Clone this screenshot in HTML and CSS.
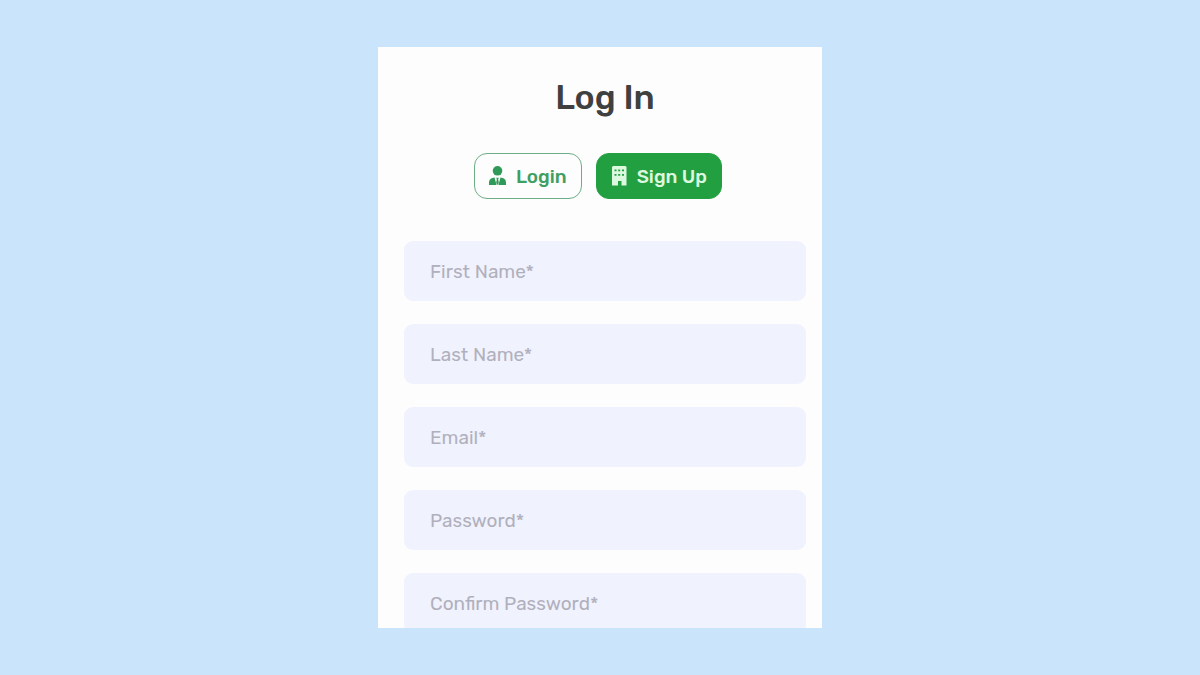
FILE: index.html
```html
<!DOCTYPE html>
<html lang="en">
<head>
<meta charset="utf-8">
<meta name="viewport" content="width=device-width, initial-scale=1">
<title>Log In</title>
<link rel="stylesheet" href="styles.css">
</head>
<body class="page">
<main class="card">
  <h1 class="title">Log In</h1>
  <div class="switch">
    <button class="btn btn-outline" type="button">
      <svg class="icon" viewBox="0 0 20 20" aria-hidden="true">
        <circle cx="10.500" cy="4.800" r="4.800"/>
        <path d="M2 19V16.500q.2-3.600 3.500-4.500l2-.5L9.600 19zM19 19V16.500q-.2-3.600-3.500-4.500l-2-.5L11.400 19zM9.200 11.700h2.600l-.6 1.600.6 3.500-1.300 2.200-1.300-2.200.6-3.500z"/>
      </svg>
      <span>Login</span>
    </button>
    <button class="btn btn-solid" type="button">
      <svg class="icon" viewBox="0 0 20 20" aria-hidden="true">
        <path fill-rule="evenodd" d="M4 0h12.500l1 1v18.500h-5V15h-3.500v4.500H3V1zM5.500 3.500v1.700h2V3.500zm3.700 0v1.700h2V3.500zm3.800 0v1.700h2V3.500zM5.500 8v1.700h2V8zm3.700 0v1.700h2V8zM13 8v1.700h2V8z"/>
      </svg>
      <span>Sign Up</span>
    </button>
  </div>
  <form class="form">
    <input class="field" type="text" placeholder="First Name*" aria-label="First Name">
    <input class="field" type="text" placeholder="Last Name*" aria-label="Last Name">
    <input class="field" type="email" placeholder="Email*" aria-label="Email">
    <input class="field" type="password" placeholder="Password*" aria-label="Password">
    <input class="field" type="password" placeholder="Confirm Password*" aria-label="Confirm Password">
  </form>
</main>
</body>
</html>
```
FILE: styles.css
```css
* {
  box-sizing: border-box;
}

.page {
  display: flex;
  justify-content: center;
  height: 100vh;
  margin: 0;
  padding: 47px 16px;
  background: #c9e4fb;
  font-family: Rubik, Roboto, sans-serif;
}

.card {
  width: 100%;
  max-width: 444px;
  padding: 31px 16px 0 26px;
  overflow: hidden;
  background: #fdfdfd;
}

.title {
  margin: 0;
  color: #404040;
  font-size: 34px;
  font-weight: 500;
  line-height: 40px;
  text-align: center;
}

.switch {
  display: flex;
  justify-content: center;
  margin-top: 35px;
}

.btn {
  display: flex;
  align-items: center;
  gap: 8px;
  height: 46px;
  margin-right: 14px;
  padding: 0 14px 0 12px;
  border: 1px solid #22a041;
  border-radius: 13px;
  font-family: inherit;
  font-size: 19px;
  font-weight: 500;
}

.btn-outline {
  gap: 9px;
  border-color: #6dae87;
  background: #fdfdfd;
  color: #3f9f61;
}

.btn-solid {
  background: #22a041;
  color: #dcf8df;
}

.icon {
  width: 20px;
  height: 20px;
  fill: currentColor;
}

.btn-outline .icon {
  fill: #2f9a58;
}

.form {
  display: flex;
  flex-direction: column;
  gap: 23px;
  margin-top: 42px;
}

.field {
  flex: none;
  width: 100%;
  height: 60px;
  padding: 0 26px;
  border: 0;
  border-radius: 9px;
  background: #f0f2fe;
  color: #404040;
  font-family: inherit;
  font-size: 19px;
}

.field::placeholder {
  color: #b0b0bc;
  opacity: 1;
}
```
